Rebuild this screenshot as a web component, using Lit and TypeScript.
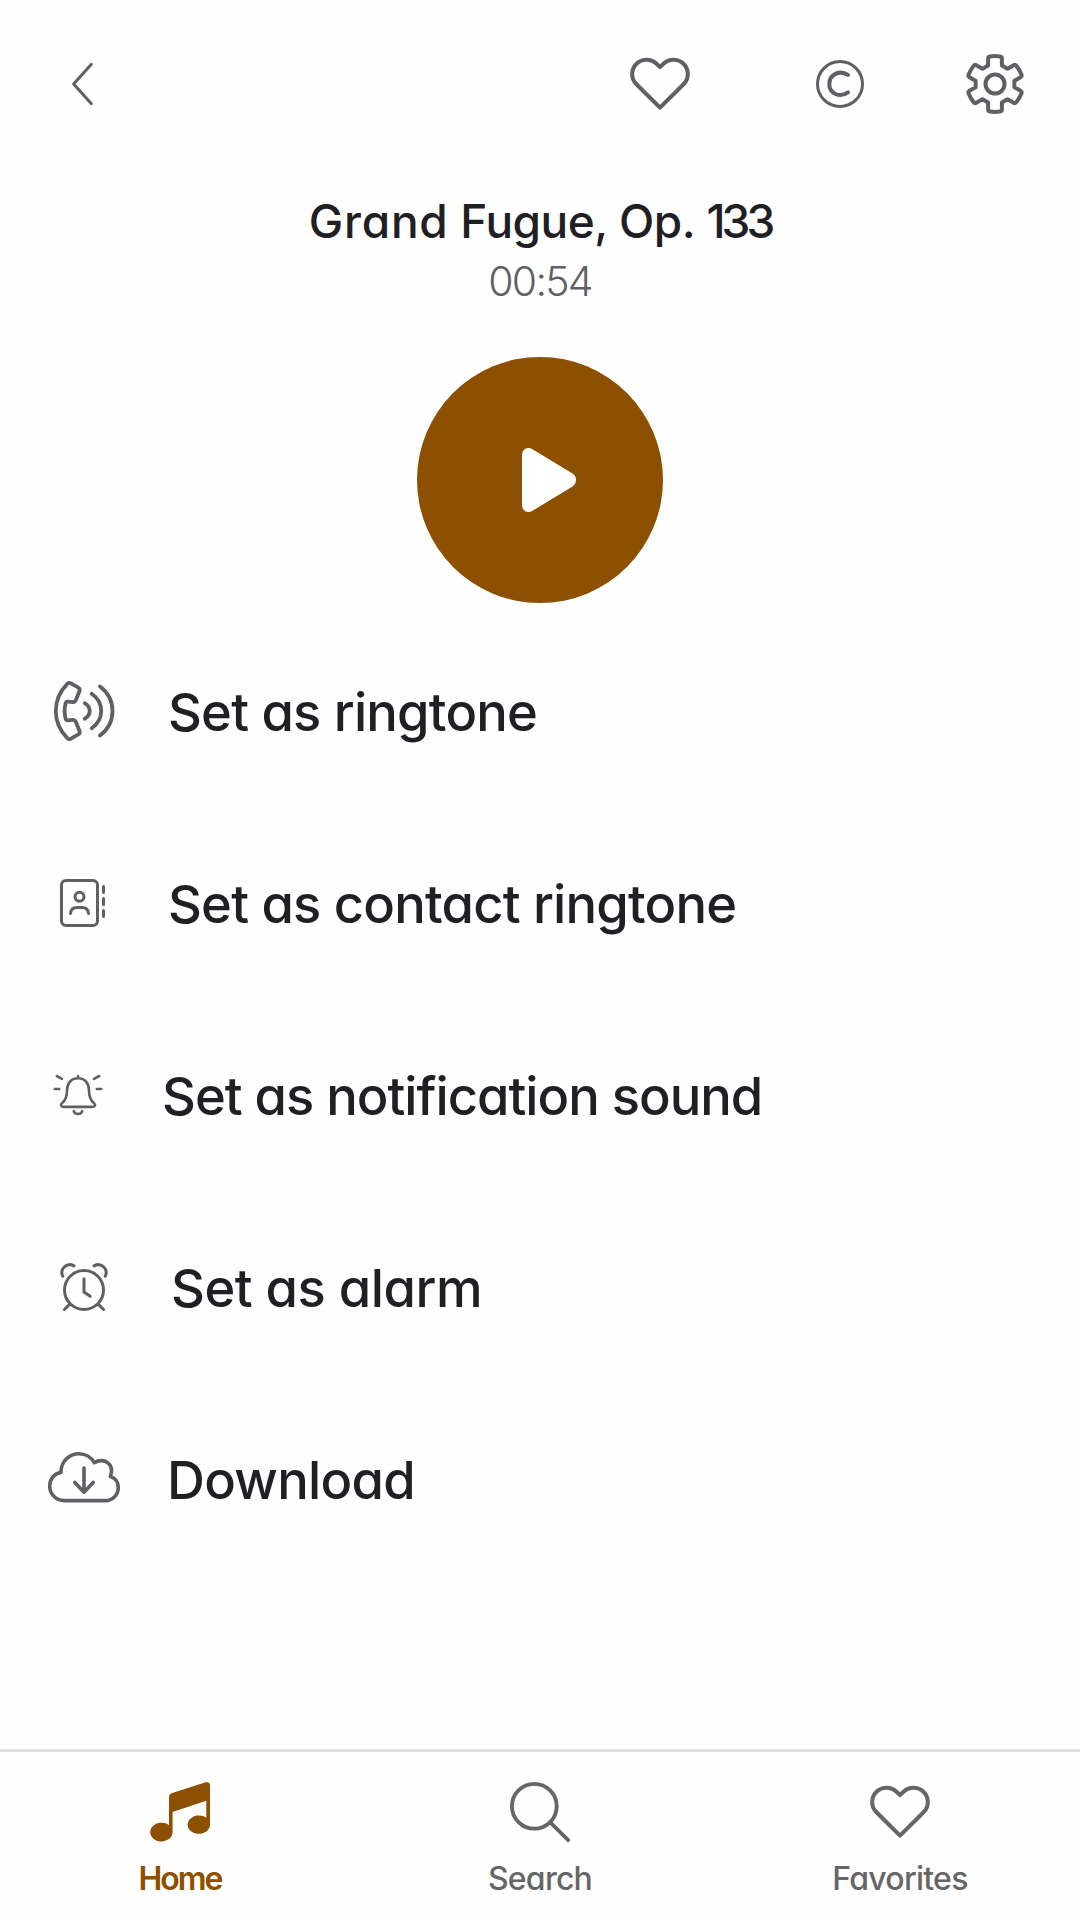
import { LitElement, html, css, svg, nothing } from "lit";
import type { SVGTemplateResult } from "lit";
import { customElement } from "lit/decorators.js";
import { classMap } from "lit/directives/class-map.js";

interface Action {
  id: string;
  label: string;
  size: number;
  viewBox: string;
  stroke: number;
  art: SVGTemplateResult;
}

interface Tab {
  id: string;
  label: string;
  active: boolean;
  art: SVGTemplateResult;
}

const heart = svg`<path stroke-width="4" d="M30 13.2 L26.8 10 A14.3 14.3 0 0 0 6.2 30 L30 53.6 L53.8 30 A14.3 14.3 0 0 0 33.2 10 Z"/>`;

/** Outline of a six-toothed gear centred on 30,30. */
function gearPath(): string {
  const at = (x: number, y: number, turn: number) => {
    const a = (turn * Math.PI) / 180;
    const px = 30 + x * Math.cos(a) - y * Math.sin(a);
    const py = 30 + x * Math.sin(a) + y * Math.cos(a);
    return `${px.toFixed(2)} ${py.toFixed(2)}`;
  };
  let d = "";
  for (let i = 0; i < 6; i++) {
    const t = i * 60;
    d += `${i ? "L" : "M"}${at(-6.9, -18.4, t)} L${at(-6.9, -25.6, t)} `;
    d += `Q${at(-6.9, -27.3, t)} ${at(-5, -27.6, t)} Q${at(0, -28.3, t)} ${at(5, -27.6, t)} `;
    d += `Q${at(6.9, -27.3, t)} ${at(6.9, -25.6, t)} L${at(6.9, -18.4, t)} `;
  }
  return d + "Z";
}

const actions: Action[] = [
  {
    id: "ringtone",
    label: "Set as ringtone",
    size: 60,
    viewBox: "0 0 60 60",
    stroke: 3.8,
    art: svg`
      <path d="M16.5 2.2 L24 6.4 Q26.3 7.7 25.6 9.7 L22 18.8 Q20.9 21.4 18.5 21.2 L13.8 20.6 Q12 20.4 11.6 22.5 Q9.6 30 11.6 37.5 Q12 39.6 13.8 39.4 L18.5 38.8 Q20.9 38.6 22 41.2 L25.6 50.3 Q26.3 52.3 24 53.6 L16.5 57.8 Q15 58.6 13.5 57.4 Q1.8 45.5 1.8 30 Q1.8 14.5 13.5 2.6 Q15 1.4 16.5 2.2Z"/>
      <path d="M30.7 22.2 Q35.7 25.3 35.7 30 Q35.7 34.7 30.7 37.8"/>
      <path d="M37.7 12.8 Q47.2 19.5 47.2 30 Q47.2 40.5 37.7 47.2"/>
      <path d="M46 5.5 Q58.5 15 58.5 30 Q58.5 45 46 54.5"/>`,
  },
  {
    id: "contact",
    label: "Set as contact ringtone",
    size: 48,
    viewBox: "0 0 48 48",
    stroke: 3,
    art: svg`
      <rect x="1.5" y="1.5" width="36" height="45" rx="4.5"/>
      <circle cx="19.5" cy="17.7" r="4.5"/>
      <path d="M10.5 34.5 Q10.9 28.5 17 28.5 H22 Q28.1 28.5 28.5 34.5"/>
      <path d="M43.5 7.5 V13.4 M43.5 19.5 V25.6 M43.5 31.6 V37.5"/>`,
  },
  {
    id: "notification",
    label: "Set as notification sound",
    size: 48,
    viewBox: "0 0 48 48",
    stroke: 2.6,
    art: svg`
      <path d="M24 5 V7 M24 7.2 C16.6 7.2 13 12.8 13 19.5 C13 27 10.6 30 8.2 32 Q6.6 33.4 7 34.5 Q7.4 35.9 9.5 35.9 H38.5 Q40.6 35.9 41 34.5 Q41.4 33.4 39.8 32 C37.4 30 35 27 35 19.5 C35 12.8 31.4 7.2 24 7.2Z"/>
      <path d="M19.8 40.2 Q20.6 43 24 43 Q27.4 43 28.2 40.2"/>
      <path d="M2.8 5 L8 7.8 M45.2 5 L40 7.8 M0.8 18 H5.2 M47.2 18 H42.8"/>`,
  },
  {
    id: "alarm",
    label: "Set as alarm",
    size: 48,
    viewBox: "0 0 48 48",
    stroke: 3,
    art: svg`
      <circle cx="24" cy="27" r="19.5"/>
      <path d="M24 15.8 V29 L30.2 33.3"/>
      <path d="M9.6 41.4 L4.4 46.5 M38.4 41.4 L43.6 46.5"/>
      <path d="M2.8 13.2 C-0.6 6.6 6.2 -1.2 14 2.9 M45.2 13.2 C48.6 6.6 41.8 -1.2 34 2.9"/>`,
  },
  {
    id: "download",
    label: "Download",
    size: 72,
    viewBox: "0 2 72 72",
    stroke: 3.6,
    art: svg`
      <path d="M16 59.6 H57.5 A13 13 0 0 0 70.3 46.5 C70.3 41 67 36.8 62.3 35.4 C63 33.5 63.6 32 63.6 29.5 C63.6 24 59 19.6 53.3 19.6 C50.5 19.6 48.5 20.3 46.3 21.7 C43.5 16.5 37.5 12.7 31 12.7 C21 12.7 12.9 20.5 12.9 31.4 C6.5 32.4 1.7 38 1.7 45.2 C1.7 53 8 59.6 16 59.6Z"/>
      <path d="M36 27 V51 M26.8 41.5 L36 51.2 L45.2 41.5"/>`,
  },
];

const tabs: Tab[] = [
  {
    id: "home",
    label: "Home",
    active: true,
    art: svg`
      <path d="M19 44 V14.5 Q19 12 21.5 11.2 L55.7 0.3 Q60 -0.6 60 3.5 V43 A11.2 9.2 0 1 1 56.3 35.8 V18.7 L22.6 30 V50.3 A11.2 9.4 0 1 1 19 43.2Z"/>`,
  },
  {
    id: "search",
    label: "Search",
    active: false,
    art: svg`<circle stroke-width="3.8" cx="24.3" cy="24.3" r="22.4"/><path stroke-width="3.8" d="M40.8 40.8 L58.2 58.2"/>`,
  },
  { id: "favorites", label: "Favorites", active: false, art: heart },
];

@customElement("app-root")
export class AppRoot extends LitElement {
  static styles = css`
    :host {
      display: flex;
      flex-direction: column;
      height: 1920px;
      background: #fefefe;
      color: #1f2024;
      font-family: Inter, "Liberation Sans", sans-serif;
      font-feature-settings: "cv11";
      font-weight: 500;
    }
    svg {
      display: block;
      flex: none;
      overflow: visible;
      fill: none;
      stroke: #5f6064;
      stroke-linecap: round;
      stroke-linejoin: round;
    }
    .header {
      display: flex;
      align-items: center;
      height: 168px;
      padding: 0 55px 0 60px;
    }
    .tools {
      display: flex;
      align-items: center;
      margin-left: auto;
    }
    .copyright {
      margin: 0 101px 0 126px;
    }
    .track {
      display: flex;
      flex-direction: column;
      align-items: center;
      padding-top: 25px;
    }
    .title {
      margin: 0;
      font-size: 46px;
      line-height: 56px;
      font-weight: 500;
      letter-spacing: -0.5px;
    }
    .title .lead {
      letter-spacing: 0.8px;
    }
    .title .number {
      letter-spacing: -4px;
    }
    .time {
      margin-top: 8px;
      font-size: 41px;
      line-height: 48px;
      font-weight: 300;
      letter-spacing: -1.8px;
      color: #5f6064;
    }
    .play {
      display: grid;
      place-items: center;
      width: 246px;
      height: 246px;
      margin-top: 52px;
      border-radius: 50%;
      background: #8d4f00;
    }
    .play svg {
      fill: #fff;
      stroke: none;
    }
    .actions {
      display: flex;
      flex-direction: column;
      margin: 12px 0 0;
      padding: 0;
      list-style: none;
    }
    .action {
      display: grid;
      grid-template-columns: 72px auto;
      justify-content: start;
      align-items: center;
      column-gap: 48px;
      height: 192px;
      padding-left: 48px;
      font-size: 52.5px;
      line-height: 64px;
      letter-spacing: -0.8px;
      white-space: nowrap;
    }
    .action svg {
      justify-self: center;
    }
    .label {
      padding-top: 2px;
    }
    .action.notification {
      padding-left: 42px;
      letter-spacing: -1.02px;
    }
    .action.alarm {
      column-gap: 51px;
      letter-spacing: -0.5px;
    }
    .action.download {
      column-gap: 47px;
      letter-spacing: -0.7px;
    }
    .nav {
      display: grid;
      grid-template-columns: repeat(3, 1fr);
      height: 168px;
      margin-top: auto;
      border-top: 3px solid #e0dfe3;
    }
    .tab {
      display: flex;
      flex-direction: column;
      align-items: center;
      padding-top: 30px;
      font-size: 32px;
      line-height: 40px;
      letter-spacing: -0.75px;
      color: #666;
    }
    .tab svg {
      margin-bottom: 17px;
      stroke: #666;
    }
    .tab.active {
      font-weight: 600;
      letter-spacing: -2px;
      color: #8d4f00;
    }
    .tab.active svg {
      fill: #8d4f00;
      stroke: none;
    }
  `;

  render() {
    return html`
      <header class="header">
        <svg width="48" height="48" viewBox="0 0 48 48" stroke-width="3">
          <path d="M31.4 4.3 L13.6 24 L31.4 43.7" />
        </svg>
        <div class="tools">
          <svg width="60" height="60" viewBox="0 0 60 60">${heart}</svg>
          <svg class="copyright" width="48" height="48" viewBox="0 0 48 48">
            <circle stroke-width="3" cx="24" cy="24" r="22.5" />
            <path stroke-width="4" d="M32 14.9 C23.5 9.6 13.3 14.5 13.3 24 C13.3 33.5 23.5 38.4 32 32.3" />
          </svg>
          <svg width="60" height="60" viewBox="0 0 60 60" stroke-width="4">
            <path d=${gearPath()} />
            <circle cx="30" cy="30" r="9.5" />
          </svg>
        </div>
      </header>
      <section class="track">
        <h1 class="title"><span class="lead">Grand</span> Fugue, Op. <span class="number">133</span></h1>
        <div class="time">00:54</div>
        <div class="play">
          <svg width="84" height="84" viewBox="0 0 84 84">
            <path d="M24 17 C24 11.2 29.5 8.2 34.5 11.2 L74.5 35.6 C79.2 38.6 79.2 45.4 74.5 48.4 L34.5 72.8 C29.5 75.8 24 72.8 24 67Z" />
          </svg>
        </div>
      </section>
      <ul class="actions">
        ${actions.map(
          (a) => html`<li class=${classMap({ action: true, [a.id]: true })}>
            <svg width=${a.size} height=${a.size} viewBox=${a.viewBox} stroke-width=${a.stroke}>${a.art}</svg>
            <span class="label">${a.label}</span>
          </li>`,
        )}
      </ul>
      <nav class="nav">
        ${tabs.map(
          (t) => html`<div class=${classMap({ tab: true, active: t.active })} aria-current=${t.active ? "page" : nothing}>
            <svg width="60" height="60" viewBox="0 0 60 60">${t.art}</svg>
            <span>${t.label}</span>
          </div>`,
        )}
      </nav>
    `;
  }
}
